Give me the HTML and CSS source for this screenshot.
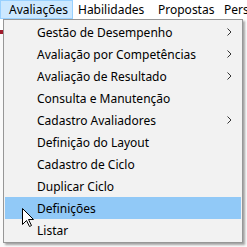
FILE: index.html
```html
<!DOCTYPE html>
<html>
<head>
<title>Menu Avaliações</title>
<link rel="stylesheet" href="styles.css">
</head>
<body>

<div class="screen">
	<div class="menubar">
		<div class="mb-item mb-open mb-first">Avaliações</div>
		<div class="mb-item mb-second">Habilidades</div>
		<div class="mb-item mb-third">Propostas</div>
		<div class="mb-item">Perso</div>
	</div><!-- end menubar -->

	<div class="page">
		<span class="mark"></span>
	</div><!-- end page -->

	<div class="dropdown">
		<div class="dd-item">Gestão de Desempenho <svg class="chev" width="5" height="8" viewBox="0 0 5 8"><polyline points="0.5,0.5 4,4 0.5,7.5" /></svg></div>
		<div class="dd-item">Avaliação por Competências <svg class="chev" width="5" height="8" viewBox="0 0 5 8"><polyline points="0.5,0.5 4,4 0.5,7.5" /></svg></div>
		<div class="dd-item">Avaliação de Resultado <svg class="chev" width="5" height="8" viewBox="0 0 5 8"><polyline points="0.5,0.5 4,4 0.5,7.5" /></svg></div>
		<div class="dd-item">Consulta e Manutenção</div>
		<div class="dd-item">Cadastro Avaliadores <svg class="chev" width="5" height="8" viewBox="0 0 5 8"><polyline points="0.5,0.5 4,4 0.5,7.5" /></svg></div>
		<div class="dd-item">Definição do Layout</div>
		<div class="dd-item">Cadastro de Ciclo</div>
		<div class="dd-item">Duplicar Ciclo</div>
		<div class="dd-item dd-hover">Definições</div>
		<div class="dd-item">Listar</div>
	</div><!-- end dropdown -->

	<svg class="cursor" width="13" height="20" viewBox="0 0 13 20">
		<path d="M0.5,0.5 L0.5,16.5 L4.5,12.5 L7.5,18.5 L9.5,17.5 L6.5,11.5 L11.5,11.5 Z" />
	</svg>
</div><!-- end screen -->

</body>
</html>
```

FILE: styles.css
```css
body {
margin: 0;
background: #fff;
font-family: "Noto Sans", "Open Sans", sans-serif;
font-size: 12px;
color: #000;
}

.screen {
position: relative;
width: 247px;
height: 247px;
overflow: hidden;
background: #fff;
}

.menubar {
display: flex;
height: 19px;
background: #fff;
}

.mb-item {
box-sizing: border-box;
flex-shrink: 0;
height: 19px;
line-height: 18px;
padding-left: 4px;
white-space: nowrap;
border: solid transparent 1px;
}

.mb-first {
width: 73px;
padding-left: 8px;
}
.mb-second {
width: 80px;
}
.mb-third {
width: 66px;
}

.mb-open {
background: #cce8ff;
border-color: #99d1ff;
}

.page {
height: 228px;
background: #fafafa;
}

.mark {
display: block;
width: 3px;
height: 4px;
margin-top: 11px;
background: #a01c2c;
}

/* the open menu sits over the page */
.dropdown {
position: absolute;
left: 3px;
top: 19px;
width: 238px;
padding: 1px 0;
background: #f2f2f2;
border: solid #979797 1px;
box-shadow: 2px 2px 2px rgba(0,0,0,0.35);
}

.dd-item {
display: flex;
align-items: center;
justify-content: space-between;
height: 22px;
margin: 0 1px;
padding: 0 9px 0 32px;
white-space: nowrap;
}

.dd-hover {
background: #91c9f7;
}

.chev {
fill: none;
stroke: #333;
stroke-width: 1;
}

.cursor {
position: absolute;
left: 22px;
top: 208px;
}
.cursor path {
fill: #fff;
stroke: #000;
stroke-width: 1;
stroke-linejoin: miter;
}
```
